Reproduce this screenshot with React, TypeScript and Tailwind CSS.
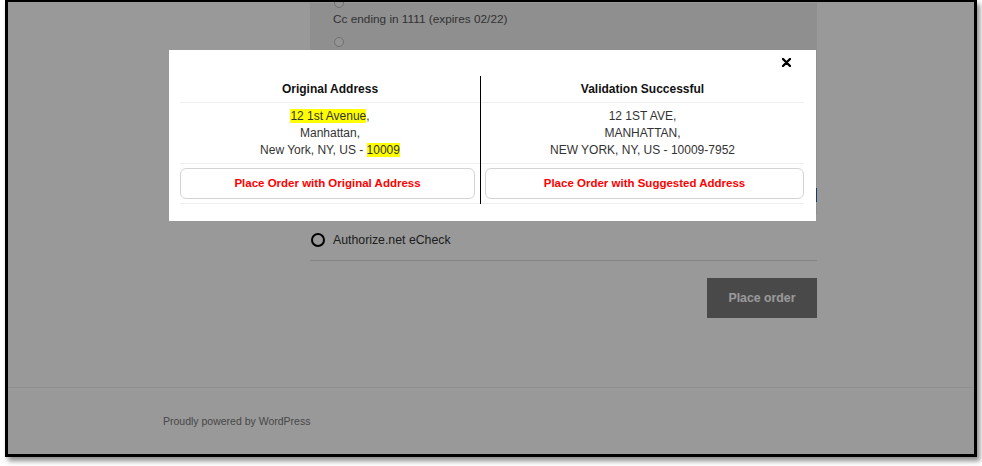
import React from "react";

function Radio({ big }: { big?: boolean }) {
    if (big) {
        return <span className="block w-[14px] h-[14px] rounded-full border-2 border-black bg-white shrink-0" />;
    }
    return <span className="block w-[10px] h-[10px] rounded-full border border-[#bbb] bg-[#f7f7f7] shrink-0" />;
}

function PageBehind() {
    return (
        <div className="flex flex-col h-full pt-[1px]">
            <div className="ml-[302px] w-[507px]">
                {/* payment box */}
                <div className="bg-[#eeeeee] h-[212px] flex flex-col">
                    <div className="pl-[24px] -mt-[5px]">
                        <Radio />
                    </div>
                    <p className="pl-[23px] mt-[3px] text-[11.8px] leading-[16px] text-[#555]">
                        Cc ending in 1111 (expires 02/22)
                    </p>
                    <div className="pl-[24px] mt-[10px]">
                        <Radio />
                    </div>
                    <div className="flex justify-end mt-[141px]">
                        <span className="block w-[3px] h-[14px] bg-[#2c5fae]" />
                    </div>
                </div>
                <div className="flex items-center gap-[8px] pl-[1px] mt-[18px] h-[14px]">
                    <Radio big />
                    <span className="text-[12.3px] text-[#333]">Authorize.net eCheck</span>
                </div>
                <div className="mt-[13px] border-t border-[#dddddd]" />
                <div className="flex justify-end mt-[17px]">
                    <button className="w-[110px] h-[40px] bg-[#7b7b7b] text-white font-bold text-[12.3px]">
                        Place order
                    </button>
                </div>
            </div>
            <div className="mt-[69px] border-t border-[#eeeeee]" />
            <p className="ml-[155px] mt-[26px] text-[10.5px] text-[#777]">
                Proudly powered by WordPress
            </p>
        </div>
    );
}

function Column({ title, lines, button, left }: { title: string; lines: React.ReactNode[]; button: string; left?: boolean }) {
    return (
        <div className={left ? "w-[301px] border-r border-black" : "w-[323px]"}>
            <div className="h-[27px] border-b border-[#eeeeee] flex items-center justify-center font-bold text-[12px] text-[#111]">
                {title}
            </div>
            <div className="h-[61px] border-b border-[#eeeeee] flex flex-col items-center justify-center text-[12px] leading-[17px] text-[#333]">
                {lines.map((l, i) => (
                    <div key={i}>{l}</div>
                ))}
            </div>
            <div className={"h-[40px] border-b border-[#eeeeee] pt-[4px] " + (left ? "pr-[5px]" : "pl-[4px]")}>
                <div className="h-[31px] rounded-[6px] border border-[#d4d4d4] flex items-center justify-center text-[#ff0000] font-bold text-[11.5px]">
                    {button}
                </div>
            </div>
        </div>
    );
}

function Modal() {
    return (
        <div className="absolute left-[161px] top-[48px] w-[647px] h-[171px] bg-white pt-[26px] pl-[11px]">
            <svg className="absolute right-[25px] top-[8px]" width="9" height="9" viewBox="0 0 9 9">
                <path d="M1 1 L8 8 M8 1 L1 8" stroke="#000" strokeWidth="2.4" strokeLinecap="round" />
            </svg>
            <div className="flex">
                <Column
                    left
                    title="Original Address"
                    lines={[
                        <><span className="bg-[#ffff00]">12 1st Avenue</span>,</>,
                        "Manhattan,",
                        <>New York, NY, US - <span className="bg-[#ffff00]">10009</span></>,
                    ]}
                    button="Place Order with Original Address"
                />
                <Column
                    title="Validation Successful"
                    lines={["12 1ST AVE,", "MANHATTAN,", "NEW YORK, NY, US - 10009-7952"]}
                    button="Place Order with Suggested Address"
                />
            </div>
        </div>
    );
}

export default function App() {
    return (
        <div className="w-[982px] h-[466px] bg-white font-['Liberation_Sans',Arial,sans-serif]">
            <div className="ml-[5px] w-[972px] h-[457px] border-[3px] border-t-[2px] border-black shadow-[3px_4px_5px_rgba(0,0,0,0.45)] relative overflow-hidden bg-white">
                <PageBehind />
                <div className="absolute inset-0 bg-black/40" />
                <Modal />
            </div>
        </div>
    );
}
